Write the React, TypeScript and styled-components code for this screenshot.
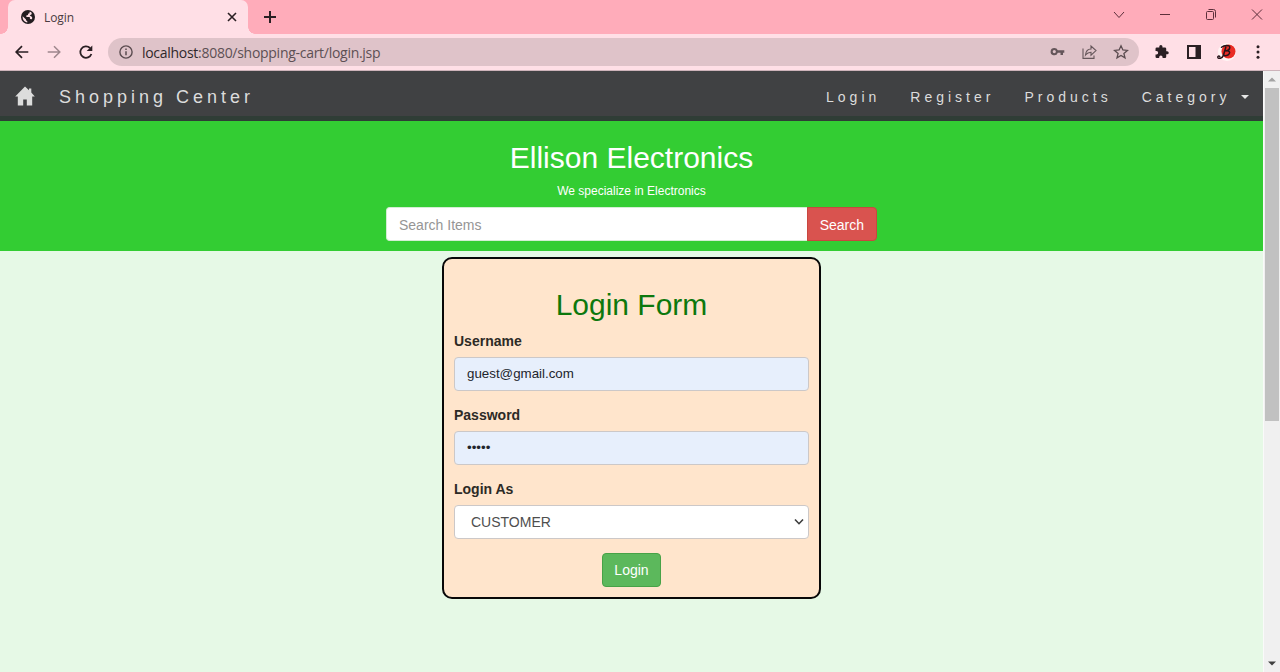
import React from "react";
import styled, { createGlobalStyle } from "styled-components";

const Global = createGlobalStyle`
  *, *::before, *::after { box-sizing: border-box; }
  html, body { margin: 0; padding: 0; overflow: hidden; }
  body { font-family: "Liberation Sans", Arial, sans-serif; font-size: 14px; line-height: 20px; color: #333; }
`;

const Window = styled.div`
  width: 1280px;
  height: 672px;
  display: flex;
  flex-direction: column;
  overflow: hidden;
`;

const TabStrip = styled.div`
  flex: none;
  height: 34px;
  background: #ffacba;
  display: flex;
  padding-left: 8px;
`;

const Tab = styled.div`
  position: relative;
  width: 240px;
  height: 34px;
  background: #ffdfe6;
  border-radius: 7px 7px 0 0;
  display: flex;
  align-items: center;
  padding: 0 10px 0 13px;
  &::before,
  &::after {
    content: "";
    position: absolute;
    bottom: 0;
    width: 7px;
    height: 7px;
  }
  &::before {
    left: -7px;
    background: radial-gradient(circle at 0 0, transparent 6.5px, #ffdfe6 7px);
  }
  &::after {
    right: -7px;
    background: radial-gradient(circle at 100% 0, transparent 6.5px, #ffdfe6 7px);
  }
`;

const TabTitle = styled.span`
  flex: 1;
  margin-left: 9px;
  padding-top: 1px;
  font: 12px/16px "Open Sans", "Noto Sans", sans-serif;
  letter-spacing: -0.1px;
  color: #4a3b40;
`;

const NewTab = styled.div`
  width: 44px;
  display: flex;
  align-items: center;
  justify-content: center;
`;

const WindowControls = styled.div`
  margin-left: auto;
  display: flex;
  align-items: center;
  padding-bottom: 5px;
  & > span {
    width: 46px;
    display: flex;
    justify-content: center;
  }
`;

const Toolbar = styled.div`
  flex: none;
  height: 37px;
  background: #ffdfe6;
  border-bottom: 1px solid #cdb3ba;
  display: flex;
  align-items: center;
  padding: 0 14px;
`;

const NavButtons = styled.div`
  display: flex;
  gap: 16px;
  width: 94px;
`;

const AddressBar = styled.div`
  width: 1032px;
  height: 28px;
  border-radius: 14px;
  background: #dfc3c9;
  display: flex;
  align-items: center;
  padding: 0 10px;
`;

const Url = styled.span`
  flex: 1;
  margin-left: 8px;
  padding-top: 1px;
  font: 14px/20px "Open Sans", "Noto Sans", sans-serif;
  letter-spacing: -0.28px;
  color: #5d5054;
  em { font-style: normal; color: #30282b; }
`;

const BarIcons = styled.div<{ $gap: number; $left?: number }>`
  display: flex;
  align-items: center;
  gap: ${(p) => p.$gap}px;
  margin-left: ${(p) => p.$left ?? 0}px;
  svg { flex: none; }
`;

const Viewport = styled.div`
  flex: 1;
  display: flex;
  min-height: 0;
`;

const Page = styled.main`
  width: 1263px;
  background: #e6f9e6;
`;

const Navbar = styled.nav`
  height: 50px;
  background: #404143;
  border-bottom: 5px solid #2f3d36;
  display: flex;
  align-items: center;
  padding: 6px 14px 0 14px;
  color: #dcdcdc;
  letter-spacing: 4px;
  & > svg { margin-bottom: 2px; }
`;

const Brand = styled.span`
  margin-left: 23px;
  padding-top: 1px;
  font-size: 18px;
`;

const NavLinks = styled.div`
  margin-left: auto;
  display: flex;
  gap: 30px;
`;

const NavLink = styled.a`
  display: flex;
  align-items: center;
`;

const Caret = styled.i`
  margin: 1px 0 0 10.5px;
  border: 4px solid transparent;
  border-top-color: #e6e6e6;
  border-bottom: 0;
`;

const Hero = styled.header`
  height: 130px;
  background: #33cd33;
  color: #fff;
  display: flex;
  flex-direction: column;
  align-items: center;
`;

const HeroTitle = styled.h1`
  margin: 20px 0 0;
  font-size: 30px;
  line-height: 33px;
  font-weight: 400;
`;

const HeroText = styled.p`
  margin: 9px 0 8px;
  font-size: 12px;
  line-height: 16px;
`;

const SearchGroup = styled.form`
  display: flex;
  width: 491px;
  height: 34px;
`;

const SearchBox = styled.div`
  flex: 1;
  height: 34px;
  background: #fff;
  border: 1px solid #d4eed4;
  border-right: 0;
  border-radius: 4px 0 0 4px;
  padding: 7px 12px 5px;
  color: #959595;
`;

const Button = styled.button<{ $tone: "danger" | "success" }>`
  height: 34px;
  border: 1px solid ${(p) => (p.$tone === "danger" ? "#c9473f" : "#47a247")};
  background: ${(p) => (p.$tone === "danger" ? "#d9534f" : "#5cb85c")};
  border-radius: ${(p) => (p.$tone === "danger" ? "0 4px 4px 0" : "4px")};
  color: #fff;
  font: 14px/20px "Liberation Sans", Arial, sans-serif;
  padding: ${(p) => (p.$tone === "danger" ? "7px 12px 5px" : "6px 11.5px")};
`;

const LoginCard = styled.form`
  width: 379px;
  height: 342px;
  margin: 6px auto 0 442px;
  border: 2px solid #080808;
  border-radius: 10px;
  background: #ffe5cc;
  padding: 29px 10px 0;
  display: flex;
  flex-direction: column;
`;

const FormTitle = styled.h2`
  margin: 0 0 10px;
  text-align: center;
  font-size: 30px;
  line-height: 33px;
  font-weight: 400;
  color: #0d780d;
`;

const Label = styled.label`
  font-weight: 700;
  line-height: 20px;
  margin-bottom: 6px;
  color: #2c2a26;
`;

const Field = styled.div<{ $kind?: "autofill" | "select" }>`
  height: 34px;
  border: 1px solid #ccc8c8;
  border-radius: 4px;
  background: ${(p) => (p.$kind === "select" ? "#fff" : "#e7effc")};
  margin-bottom: 14px;
  padding: ${(p) => (p.$kind === "select" ? "0 4px 0 16px" : "0 12px")};
  display: flex;
  align-items: center;
  justify-content: space-between;
  color: ${(p) => (p.$kind === "select" ? "#4e4e4e" : "#22252c")};
  font-size: ${(p) => (p.$kind === "select" ? 14 : 13.333)}px;
`;

const Actions = styled.div`
  display: flex;
  justify-content: center;
`;

const Scrollbar = styled.aside`
  width: 17px;
  background: #f0f0f0;
  border-left: 1px solid #fafafa;
  display: flex;
  flex-direction: column;
  align-items: center;
`;

const ScrollArrow = styled.div`
  height: 17px;
  width: 100%;
  display: flex;
  align-items: center;
  justify-content: center;
`;

const Thumb = styled.div`
  width: 14px;
  height: 333px;
  background: #c1c1c1;
  margin-bottom: auto;
`;

const ink = "#2a1f23";

export default function App() {
  return (
    <Window>
      <Global />
      <TabStrip>
        <Tab>
          <svg width="14" height="14" viewBox="0 0 14 14">
            <circle cx="7" cy="7" r="7" fill="#231d20" />
            <path d="M8.2 1.700C10.700 2 12.500 4.300 12.400 6.900 12.300 8.200 11.900 9.300 11.300 10.100 11 9.300 10.400 9 9.700 9V7.600C9.700 7.100 9.400 6.900 9 6.900H5.700V5.600H6.700C7.100 5.600 7.400 5.300 7.400 4.900V3.800H8.200C8.900 3.800 9.400 3.200 9.400 2.500Z" fill="#231d20" />
            <path d="M8.600 1.800 8.500 3.300 7.100 3.800 7 5.100 5.300 5.500 5.400 6.900 8.700 7.100 9 8.900 10.700 9.300C12 7.800 10.800 6.500 9.600 6L8.700 5.300 10.400 4.500 10.800 2.900C10.200 2.300 9.400 1.900 8.600 1.800Z" fill="#ffdfe6" />
            <path d="M1.700 6.300 5 9.400V10.300L6.300 11.300V12.500C3.500 12.200 1.200 9.600 1.700 6.300Z" fill="#ffdfe6" />
          </svg>
          <TabTitle>Login</TabTitle>
          <svg width="12" height="12" viewBox="0 0 12 12">
            <path d="M2 2 10 10M10 2 2 10" stroke={ink} strokeWidth="1.6" />
          </svg>
        </Tab>
        <NewTab>
          <svg width="12" height="12" viewBox="0 0 12 12">
            <path d="M6 0V12M0 6H12" stroke={ink} strokeWidth="2" />
          </svg>
        </NewTab>
        <WindowControls>
          <span><svg width="12" height="12" viewBox="0 0 12 12"><path d="M1 3 6 8.500 11 3" fill="none" stroke="#5c2f3a" /></svg></span>
          <span><svg width="12" height="12" viewBox="0 0 12 12"><path d="M1 5.500H11" stroke="#5c2f3a" /></svg></span>
          <span><svg width="12" height="12" viewBox="0 0 12 12"><rect x="1.500" y="2.500" width="7" height="8" rx="1" fill="none" stroke="#5c2f3a" /><path d="M3.500 0.500H8.500Q10.500 0.500 10.500 2.500V8.500" fill="none" stroke="#5c2f3a" /></svg></span>
          <span><svg width="12" height="12" viewBox="0 0 12 12"><path d="M1 0.500 11 10.500M11 0.500 1 10.500" stroke="#5c2f3a" /></svg></span>
        </WindowControls>
      </TabStrip>
      <Toolbar>
        <NavButtons>
          <svg width="16" height="16" viewBox="0 0 16 16"><path d="M14.300 8H2.500M8 2.200 2.200 8 8 13.800" fill="none" stroke={ink} strokeWidth="1.700" /></svg>
          <svg width="16" height="16" viewBox="0 0 16 16"><path d="M1.700 8H13.500M8 2.200 13.800 8 8 13.800" fill="none" stroke="#9e878d" strokeWidth="1.500" /></svg>
          <svg width="16" height="16" viewBox="0 0 16 16"><path d="M13.400 10A5.700 5.700 0 1 1 12 4" fill="none" stroke={ink} strokeWidth="1.800" /><path d="M14.300 1.400V7H8.700Z" fill={ink} /></svg>
        </NavButtons>
        <AddressBar>
          <svg width="16" height="16" viewBox="0 0 16 16"><circle cx="8" cy="8" r="6.100" fill="none" stroke="#5b4c50" strokeWidth="1.400" /><path d="M8 7.200V11.300M8 4.500V6" stroke="#5b4c50" strokeWidth="1.500" /></svg>
          <Url><em>localhost</em>:8080/shopping-cart/login.jsp</Url>
          <BarIcons $gap={16}>
            <svg width="16" height="16" viewBox="-1 0 16 16"><path fillRule="evenodd" d="M4.300 3.900A3.700 3.700 0 0 1 7.800 6.300H14.300V8.800H13V11H10.500V8.800H7.800A3.700 3.700 0 1 1 4.300 3.900ZM4.300 6A1.600 1.600 0 1 0 4.300 9.200 1.600 1.600 0 0 0 4.300 6Z" fill="#65565a" /></svg>
            <svg width="16" height="16" viewBox="-1 0 16 16"><path d="M1 4.500V14.400H12V11.500M9 2V5C5.800 5 3.900 7.300 3.500 11 5.200 8.800 6.700 8.200 9 8.200V11.200L14 6.600Z" fill="none" stroke="#65565a" strokeWidth="1.100" /></svg>
            <svg width="16" height="16" viewBox="-1 0 16 16"><path d="M7 1.800 8.900 6 13.400 6.400 9.900 9.400 11 13.900 7 11.500 3 13.900 4.100 9.400 0.600 6.400 5.100 6Z" fill="none" stroke="#5b4c50" strokeWidth="1.300" /></svg>
          </BarIcons>
        </AddressBar>
        <BarIcons $gap={14} $left={13}>
          <svg width="18" height="18" viewBox="-3.600 -2 28.600 28.600"><path fill={ink} d="M20.500 11H19V7a2 2 0 0 0-2-2h-4V3.500a2.500 2.500 0 0 0-5 0V5H4a2 2 0 0 0-2 2v3.800h1.500a2.700 2.700 0 0 1 0 5.400H2V20a2 2 0 0 0 2 2h3.800v-1.500a2.700 2.700 0 0 1 5.400 0V22H17a2 2 0 0 0 2-2v-4h1.500a2.500 2.500 0 0 0 0-5z" /></svg>
          <svg width="18" height="18" viewBox="0 0 18 18"><path fillRule="evenodd" d="M3 2H17V16H3ZM5 4V14H11.500V4Z" fill={ink} /></svg>
          <svg width="20" height="20" viewBox="0 0 20 20">
            <circle cx="11" cy="10" r="9" fill="#fff5f4" />
            <circle cx="12.500" cy="9.500" r="7" fill="#ea2c24" />
            <path d="M5.500 5.200C8 3 14 2.500 13.800 5.400 13.600 7.700 11 8.800 9.500 9 13 8.200 14.300 9.800 13.300 11.700 12.200 13.600 9.200 14.200 7.300 13M9.800 5.200 7.500 13C6.500 16.500 2.200 17.200 1.800 15.400 1.600 14 3 13.600 3.800 14.500" fill="none" stroke="#261419" strokeWidth="1.500" strokeLinecap="round" />
          </svg>
          <svg width="16" height="16" viewBox="0 0 16 16" fill={ink}><circle cx="8" cy="2.700" r="1.500" /><circle cx="8" cy="8" r="1.500" /><circle cx="8" cy="13.300" r="1.500" /></svg>
        </BarIcons>
      </Toolbar>
      <Viewport>
        <Page>
          <Navbar>
            <svg width="22" height="20" viewBox="0 0 22 20"><path d="M11 0.500 15 4.200V2.500H17.300V6.400L20.800 10.500H18.200V19.500H12.800V13.500H9.200V19.500H3.800V10.500H1.200Z" fill="#dcdcdc" /></svg>
            <Brand>Shopping Center</Brand>
            <NavLinks>
              <NavLink>Login</NavLink>
              <NavLink>Register</NavLink>
              <NavLink>Products</NavLink>
              <NavLink>Category<Caret /></NavLink>
            </NavLinks>
          </Navbar>
          <Hero>
            <HeroTitle>Ellison Electronics</HeroTitle>
            <HeroText>We specialize in Electronics</HeroText>
            <SearchGroup>
              <SearchBox>Search Items</SearchBox>
              <Button type="button" $tone="danger">Search</Button>
            </SearchGroup>
          </Hero>
          <LoginCard>
            <FormTitle>Login Form</FormTitle>
            <Label>Username</Label>
            <Field>guest@gmail.com</Field>
            <Label>Password</Label>
            <Field>•••••</Field>
            <Label>Login As</Label>
            <Field $kind="select">
              CUSTOMER
              <svg width="10" height="8" viewBox="0 0 10 8"><path d="M1 1.500 5 5.700 9 1.500" fill="none" stroke="#3b3b3b" strokeWidth="1.600" /></svg>
            </Field>
            <Actions>
              <Button type="button" $tone="success">Login</Button>
            </Actions>
          </LoginCard>
        </Page>
        <Scrollbar>
          <ScrollArrow><svg width="8" height="5" viewBox="0 0 8 5"><path d="M0 4.500 4 0.500 8 4.500Z" fill="#a3a3a3" /></svg></ScrollArrow>
          <Thumb />
          <ScrollArrow><svg width="8" height="5" viewBox="0 0 8 5"><path d="M0 0.500 4 4.500 8 0.500Z" fill="#404040" /></svg></ScrollArrow>
        </Scrollbar>
      </Viewport>
    </Window>
  );
}
